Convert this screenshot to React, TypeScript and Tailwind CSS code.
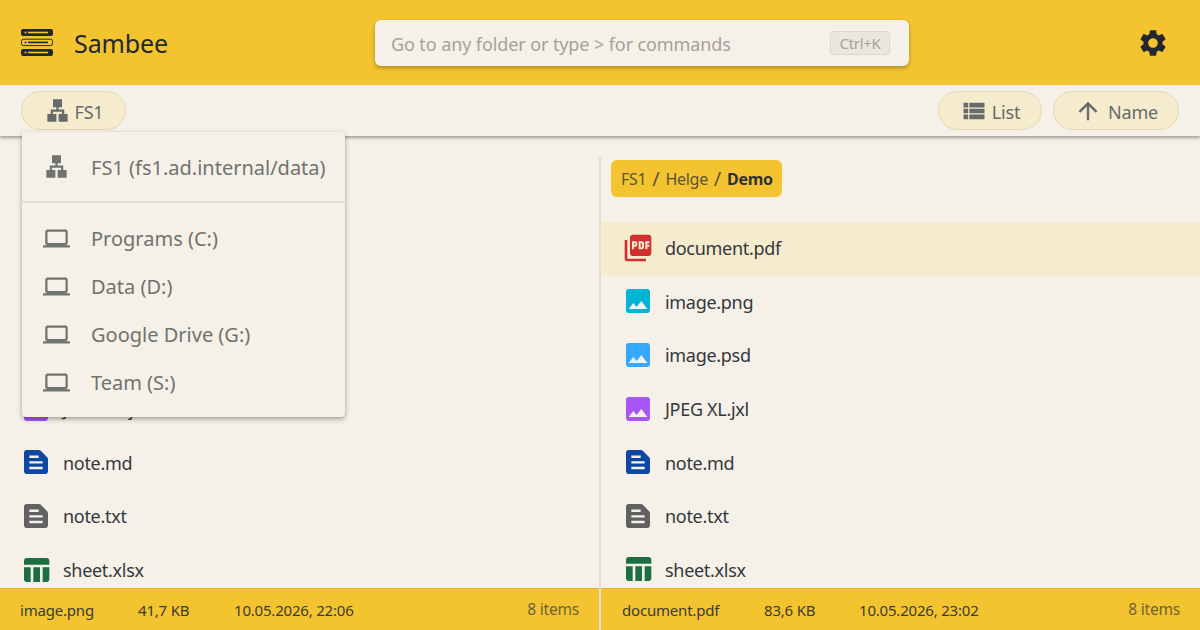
const FONT = "font-['Noto_Sans',sans-serif]";

const paths = {
  lan: "M13 22h8v-7h-3v-4h-5V9h3V2H8v7h3v2H6v4H3v7h8v-7H8v-2h8v2h-3z",
  laptop:
    "M20 18c1.1 0 1.99-.9 1.99-2L22 6c0-1.1-.9-2-2-2H4c-1.1 0-2 .9-2 2v10c0 1.1.9 2 2 2H0v2h24v-2h-4zM4 6h16v10H4V6z",
  settings:
    "M19.14 12.94c.04-.3.06-.61.06-.94 0-.32-.02-.64-.07-.94l2.03-1.58c.18-.14.23-.41.12-.61l-1.92-3.32c-.12-.22-.37-.29-.59-.22l-2.39.96c-.5-.38-1.03-.7-1.62-.94l-.36-2.54c-.04-.24-.24-.41-.48-.41h-3.84c-.24 0-.43.17-.47.41l-.36 2.54c-.59.24-1.13.57-1.62.94l-2.39-.96c-.22-.08-.47 0-.59.22L2.74 8.87c-.12.21-.08.47.12.61l2.03 1.58c-.05.3-.09.63-.09.94s.02.64.07.94l-2.03 1.58c-.18.14-.23.41-.12.61l1.92 3.32c.12.22.37.29.59.22l2.39-.96c.5.38 1.03.7 1.62.94l.36 2.54c.05.24.24.41.48.41h3.84c.24 0 .44-.17.47-.41l.36-2.54c.59-.24 1.13-.56 1.62-.94l2.39.96c.22.08.47 0 .59-.22l1.92-3.32c.12-.22.07-.47-.12-.61l-2.01-1.58zM12 15.6c-1.98 0-3.6-1.62-3.6-3.6s1.62-3.6 3.6-3.6 3.6 1.62 3.6 3.6-1.62 3.6-3.6 3.6z",
  list: "M3 14h4v-4H3v4zm0 5h4v-4H3v4zM3 9h4V5H3v4zm5 5h13v-4H8v4zm0 5h13v-4H8v4zM8 5v4h13V5H8z",
  up: "M4 12l1.41 1.41L11 7.83V20h2V7.83l5.58 5.59L20 12l-8-8-8 8z",
  pdf: "M20 2H8c-1.1 0-2 .9-2 2v12c0 1.1.9 2 2 2h12c1.1 0 2-.9 2-2V4c0-1.1-.9-2-2-2zm-8.5 7.5c0 .83-.67 1.5-1.5 1.5H9v2H7.5V7H10c.83 0 1.5.67 1.5 1.5v1zm5 2c0 .83-.67 1.5-1.5 1.5h-2.5V7H15c.83 0 1.5.67 1.5 1.5v3zm4-3H19v1h1.5V11H19v2h-1.5V7h3v1.5zM9 9.5h1v-1H9v1zM4 6H2v14c0 1.1.9 2 2 2h14v-2H4V6zm10 5.5h1v-3h-1v3z",
  image:
    "M21 19V5c0-1.1-.9-2-2-2H5c-1.1 0-2 .9-2 2v14c0 1.1.9 2 2 2h14c1.1 0 2-.9 2-2zM8.5 13.5l2.5 3.01L14.5 12l4.5 6H5l3.5-4.5z",
  doc: "M5 3h9.2c.5 0 1 .2 1.4.6l4.8 4.8c.4.4.6.9.6 1.4V19c0 1.1-.9 2-2 2H5c-1.1 0-2-.9-2-2V5c0-1.1.9-2 2-2zm2 4.2V9h7V7.2H7zm0 4.2v1.8h10v-1.8H7zm0 4.2v1.8h10v-1.8H7z",
  table:
    "M10 10.02h5V21h-5zM17 21h3c1.1 0 2-.9 2-2v-9h-5v11zm3-18H5c-1.1 0-2 .9-2 2v3h19V5c0-1.1-.9-2-2-2zM3 19c0 1.1.9 2 2 2h3V10H3v9z",
};

function Icon({ d, className }: { d: string; className: string }) {
  return (
    <svg viewBox="0 0 24 24" fill="currentColor" className={className}>
      <path d={d} />
    </svg>
  );
}

function Logo() {
  return (
    <svg viewBox="0 0 32 27" className="w-8 h-[27px]">
      <rect x="0" y="0" width="32" height="7" rx="2" fill="#22282e" />
      <circle cx="4.5" cy="3.5" r="1" fill="#f4c430" />
      <rect x="7" y="2.7" width="20" height="1.6" fill="#f4c430" />
      <rect x="0.5" y="10.2" width="31" height="6.4" rx="2" fill="none" stroke="#22282e" />
      <circle cx="4.5" cy="13.4" r="1" fill="#22282e" />
      <rect x="7" y="12.6" width="20" height="1.6" fill="#22282e" />
      <rect x="0" y="20" width="32" height="7" rx="2" fill="#22282e" />
      <circle cx="4.5" cy="23.5" r="1" fill="#f4c430" />
      <rect x="7" y="22.7" width="20" height="1.6" fill="#f4c430" />
    </svg>
  );
}

function Pill({ d, label, size, gap }: { d: string; label: string; size: string; gap: string }) {
  return (
    <div
      className={`h-[39px] flex items-center justify-center rounded-[20px] border border-[#e3d9b6] bg-[#f5ecce] text-[#666a6b] text-[18px] tracking-[-0.2px] ${gap}`}
    >
      <Icon d={d} className={size} />
      <span className="pt-[3px]">{label}</span>
    </div>
  );
}

function FileRow({
  d,
  color,
  name,
  pad,
  selected,
}: {
  d: string;
  color: string;
  name: string;
  pad: string;
  selected?: boolean;
}) {
  return (
    <div
      className={`h-[53.6px] shrink-0 flex items-center gap-[11px] text-[18px] tracking-[-0.3px] text-[#33383b] ${pad} ${
        selected ? "bg-[#f5ebcd]" : ""
      }`}
    >
      <Icon d={d} className={`w-8 h-8 mb-[2px] ${color}`} />
      <span>{name}</span>
    </div>
  );
}

function StatusBar({
  name,
  nameW,
  size,
  sizeW,
  date,
  pad,
}: {
  name: string;
  nameW: string;
  size: string;
  sizeW: string;
  date: string;
  pad: string;
}) {
  return (
    <div
      className={`h-[42px] shrink-0 flex items-center bg-[#f4c430] border-t border-[#e5b52a] pt-px pr-5 text-[15px] tracking-[-0.2px] text-[#3b3b33] ${pad}`}
    >
      <span className={nameW}>{name}</span>
      <span className={sizeW}>{size}</span>
      <span>{date}</span>
      <span className="ml-auto text-[15.5px] text-[#6f6338]">8 items</span>
    </div>
  );
}

function MenuDrive({ label }: { label: string }) {
  return (
    <div className="h-12 flex items-center text-[20px] text-[#70736e]">
      <div className="w-[69px] pl-[21px] pb-[2px] flex">
        <Icon d={paths.laptop} className="w-[27px] h-[27px]" />
      </div>
      <span>{label}</span>
    </div>
  );
}

export default function App() {
  return (
    <div className={`w-[1200px] h-[630px] relative overflow-hidden flex flex-col bg-[#f5f0e8] ${FONT}`}>
      <header className="h-[85px] shrink-0 flex items-center bg-[#f4c430] pl-[21px] pr-[31px]">
        <Logo />
        <span className="ml-[21px] pt-[2px] text-[25px] tracking-[-0.1px] text-[#22282e]">Sambee</span>
        <div className="absolute left-[375px] top-[20px] w-[534px] h-[46px] flex items-center justify-between rounded-md bg-[#f5f0e8] pl-4 pr-[19px] shadow-[0_2px_4px_rgba(0,0,0,0.3)]">
          <span className="pt-[2px] text-[18px] tracking-[-0.1px] text-[#a5a29b]">
            Go to any folder or type &gt; for commands
          </span>
          <span className="w-[60px] h-6 flex items-center justify-center rounded-[3px] border border-[#dcd8d0] bg-[#ebe7df] text-[15px] tracking-[-0.3px] text-[#a5a29b]">
            Ctrl+K
          </span>
        </div>
        <Icon d={paths.settings} className="ml-auto w-8 h-8 text-[#22282e]" />
      </header>

      <div className="h-[51px] shrink-0 z-10 flex items-center justify-between bg-[#f5f0e8] px-[21px] shadow-[0_2px_3px_rgba(0,0,0,0.35)]">
        <div className="w-[105px]">
          <Pill d={paths.lan} label="FS1" size="w-[27px] h-[27px]" gap="gap-[4px]" />
        </div>
        <div className="flex gap-[11px]">
          <div className="w-[104px]">
            <Pill d={paths.list} label="List" size="w-7 h-7" gap="gap-[4px]" />
          </div>
          <div className="w-[126px]">
            <Pill d={paths.up} label="Name" size="w-7 h-7" gap="gap-[6px]" />
          </div>
        </div>
      </div>

      <div className="flex-1 min-h-0 flex">
        <div className="w-[599px] flex flex-col">
          <div className="flex-1 min-h-0 overflow-hidden pt-[247px]">
            <FileRow d={paths.image} color="text-[#a855f7]" name="JPEG XL.jxl" pad="pl-5" />
            <FileRow d={paths.doc} color="text-[#0d47a1]" name="note.md" pad="pl-5" />
            <FileRow d={paths.doc} color="text-[#616161]" name="note.txt" pad="pl-5" />
            <FileRow d={paths.table} color="text-[#1d6f42]" name="sheet.xlsx" pad="pl-5" />
          </div>
          <StatusBar
            name="image.png"
            nameW="w-[118px]"
            size="41,7 KB"
            sizeW="w-[96px]"
            date="10.05.2026, 22:06"
            pad="pl-5"
          />
        </div>

        <div className="w-[601px] flex flex-col border-l-2 border-[#e3dfd7] mt-[21px]">
          <div className="flex-1 min-h-0 overflow-hidden">
            <div className="pl-[10px] pt-[3px] pb-[25px]">
              <div className="w-fit h-[37px] flex items-center rounded-md bg-[#f4c430] pl-[10px] pr-[9px] pt-px text-[16px] tracking-[-0.3px] text-[#5a5433]">
                <span>FS1</span>
                <span className="mx-[6px] text-[20px]">/</span>
                <span>Helge</span>
                <span className="mx-[6px] text-[20px]">/</span>
                <span className="font-bold text-[#2d3236]">Demo</span>
              </div>
            </div>
            <FileRow d={paths.pdf} color="text-[#d32f2f]" name="document.pdf" pad="pl-[21px]" selected />
            <FileRow d={paths.image} color="text-[#00b4d8]" name="image.png" pad="pl-[21px]" />
            <FileRow d={paths.image} color="text-[#36a9ff]" name="image.psd" pad="pl-[21px]" />
            <FileRow d={paths.image} color="text-[#a855f7]" name="JPEG XL.jxl" pad="pl-[21px]" />
            <FileRow d={paths.doc} color="text-[#0d47a1]" name="note.md" pad="pl-[21px]" />
            <FileRow d={paths.doc} color="text-[#616161]" name="note.txt" pad="pl-[21px]" />
            <FileRow d={paths.table} color="text-[#1d6f42]" name="sheet.xlsx" pad="pl-[21px]" />
          </div>
          <StatusBar
            name="document.pdf"
            nameW="w-[142px]"
            size="83,6 KB"
            sizeW="w-[95px]"
            date="10.05.2026, 23:02"
            pad="pl-[21px]"
          />
        </div>
      </div>

      {/* drive menu opened from the FS1 button */}
      <div className="absolute z-20 left-[22px] top-[132px] w-[323px] h-[285px] rounded bg-[#f5f0e8] shadow-[0_2px_5px_rgba(0,0,0,0.35)]">
        <div className="h-[71px] flex items-center border-b-2 border-[#e3dfd7] text-[20px] text-[#70736e]">
          <div className="w-[69px] pl-[21px] flex">
            <Icon d={paths.lan} className="w-[27px] h-[27px]" />
          </div>
          <span className="pt-[2px]">FS1 (fs1.ad.internal/data)</span>
        </div>
        <div className="pt-[12px]">
          <MenuDrive label="Programs (C:)" />
          <MenuDrive label="Data (D:)" />
          <MenuDrive label="Google Drive (G:)" />
          <MenuDrive label="Team (S:)" />
        </div>
      </div>
    </div>
  );
}
